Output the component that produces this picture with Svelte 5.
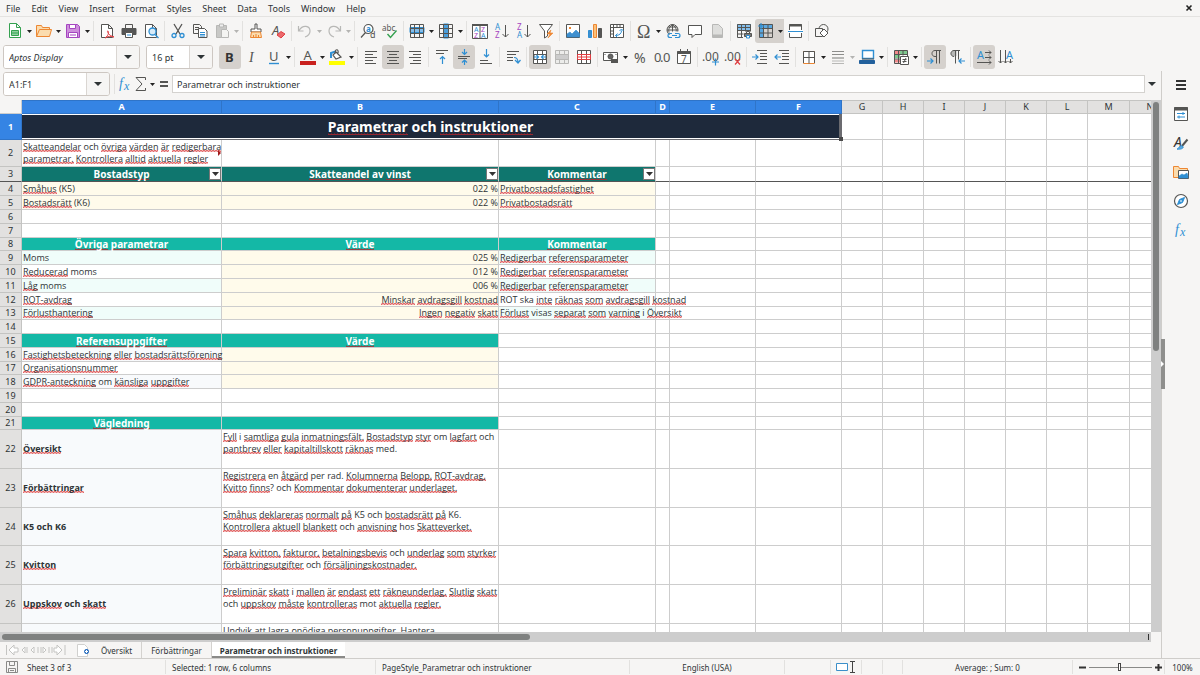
<script>
	const menus = ['File', 'Edit', 'View', 'Insert', 'Format', 'Styles', 'Sheet', 'Data', 'Tools', 'Window', 'Help'];

	const G = '#555553';
	const B = '#2f8fd3';
	const L = '#b8b8b6';
	const O = '#ed8733';
	const P = '#a545c0';
	const R = '#e03e42';

	// small builders for 16x16 icons
	const p = (d, stroke = G, fill = 'none', w = 1) =>
		`<path d="${d}" stroke="${stroke}" fill="${fill}" stroke-width="${w}"/>`;
	const t = (x, y, size, fill, str, extra = '') =>
		`<text x="${x}" y="${y}" font-size="${size}" fill="${fill}" font-family="Noto Sans, sans-serif" ${extra}>${str}</text>`;
	const grid = (c = G, fill = '#fff') => p('M1.5 1.5h13v13h-13zM1.5 5.5h13M1.5 10.5h13M5.5 1.5v13M10.5 1.5v13', c, fill);
	const page = (c = G, fill = '#fff') => p('M2.5 1.5h7l4 4v9h-11zM9.5 1.5v4h4', c, fill);

	const icons = {
		new: p('M2.5 .5h7l4 4v10h-11zM9.5 .5v4h4', '#35a150', '#fff') + p('M4.5 7.5h7v5h-7zM4.5 10h7', '#35a150', '#8fd19e'),
		open: p('M.5 13.5V2.5h5l1 2h7v2', O, '#fbdcae') + p('M.5 13.5l3-7h12l-2 7z', O, '#fbdcae'),
		save: p('M1.5 1.5h11l2 2v11h-13z', P, '#ce8fdc') + p('M4.5 1.5h6v4h-6zM3.5 9.5h9v5h-9z', P, '#fff') + p('M5 12h6', P),
		pdf: page() + p('M6 15c4-3 4-6 3-7s-1 4 6 6c-3-1-6-1-9 1z', R, '#fff'),
		print: p('M4.5 5V1.5h7V5') + p('M1 5.5h14v6H1z', G, '#555') + p('M4.5 9.5h7v5h-7z', G, '#fff') + p('M6 12h4', B),
		preview: page() + p('M6 8.5a3.5 3.5 0 1 0 7 0a3.5 3.5 0 1 0-7 0M12 11.5l3.5 3.5', B, '#d8ebf8', 1.3),
		cut: p('M4 1l6 10M12 1L6 11', G, 'none', 1.3) + p('M2 12.5a2 2 0 1 0 4 0a2 2 0 1 0-4 0M10 12.5a2 2 0 1 0 4 0a2 2 0 1 0-4 0', B, 'none', 1.3),
		copy: p('M1.5 1.5h6l2 2v7h-8zM3 4.5h4M3 6.5h4') + p('M6.5 5.5h6l2.5 2.5v6.5h-8.5z', G, '#fff') + p('M8 9.5h5M8 11.5h5M8 13h5', B),
		paste: p('M2.5 2.5h10v12h-10z', L, '#c8c8c6') + p('M5.5 1h4v3h-4z', L, '#eee') + p('M7.5 6.5h5l2 2v6h-7z', L, '#f4f4f2'),
		clone: p('M7 1h2v5h4v3H3V6h4z', G, '#fff') + p('M3.5 9h9l1 5.5h-11z', O, '#fbdcae') + p('M5.5 12v2M8 11v3M10.5 12v2', O),
		clear: t(2, 12, 13, G, 'A', 'font-style="italic"') + p('M7 12l4-3.5 4 2.5-4 4z', R, '#ec6a6d'),
		undo: p('M1.5 3v5h5M2 7.5C6 1 13 3 13 8c0 3-2 5-5 6', L, 'none', 1.2),
		redo: p('M14.5 3v5h-5M14 7.5C10 1 3 3 3 8c0 3 2 5 5 6', L, 'none', 1.2),
		find: p('M4 6a4.5 4.5 0 1 1 4.5 4.5c-3 0-4.5-2-4.5-4.5M5.5 9.5L1 14.5', G, '#fff', 1.2) + t(6, 9, 8, B, 'a', 'font-weight="bold"') + t(10, 15, 9, G, 'd'),
		spell: t(0, 8, 8, G, 'abc') + p('M5.5 11l3 3.5 6-7', '#35a150', 'none', 1.4),
		row: p('M1 4.5h14v5H1z', B, '#83beec') + grid(G, 'none'),
		column: p('M5.5 1h5v14h-5z', B, '#4a9fdd') + grid(G, 'none'),
		sort: p('M.5 1.5h15v14H.5z', G, '#fff') + p('M0 2h16', G, 'none', 2) + p('M8 3v12') + t(2, 9, 7, B, 'A') + t(2, 15, 7, P, 'Z') + t(9, 9, 7, P, 'Z') + t(9, 15, 7, B, 'A'),
		asc: t(1, 7, 8, B, 'A') + t(1, 15, 8, P, 'Z') + p('M11.5 2v12M8.5 11l3 3 3-3'),
		desc: t(1, 7, 8, P, 'Z') + t(1, 15, 8, B, 'A') + p('M11.5 2v12M8.5 11l3 3 3-3'),
		filter: p('M1.5 1.5h13L9.5 8v5l-3 2V8z', G, '#fff') + p('M13 7l-4 4h3l-2 4 5-5h-3z', O, O, 0.6),
		image: p('M1.5 1.5h13v13h-13z', G, '#fff') + p('M2 14V11l3-2 2 2 4-4 3.5 3.5V14z', B, '#3f8fce', 0.6) + p('M4 5h2', O, 'none', 2),
		chart: p('M1.5 7.5h3v7h-3z', B, '#3f8fce') + p('M6.5 1.5h3v13h-3z', O, '#fbc27b') + p('M11.5 5.5h3v9h-3z', G, '#555'),
		pivot: p('M1.5 1.5h13v13h-13z', G, '#fff') + p('M1.5 4.5h13M4.5 1.5v13M8 2v2M11 2v2M2 8h2M2 11h2') + p('M6.5 12.5c4 0 6-2 6-5M10.5 8l2-2 2 2M8.5 10.5l-2 2 2 2', B),
		omega: t(1, 15, 18, G, 'Ω', 'style="font-family:Liberation Serif,serif"'),
		link: p('M2 7a5.5 5.5 0 1 0 11 0a5.5 5.5 0 1 0-11 0M2 7h11M7.5 1.5v11M3 4h9M5 11c-2-3-2-6 2.5-9.5C12 5 12 8 10 11') + p('M5 9h9v6H5z', '#f6f5f4', '#f6f5f4') + p('M7 10.5h-2a2 2 0 0 0 0 4h2M10 10.5h3a2 2 0 0 1 0 4h-3M7 12.5h5', B, 'none', 1.2),
		comment: p('M1.5 2.5h13v9H8l-3 3v-3H1.5z', G, '#fff'),
		header: p('M3.5 1.5h6l4 4v9h-10z', L, '#dededc') + p('M4 13h9', L, 'none', 3),
		area: p('M1.5 1.5h13v6h-13z', B, '#83beec') + p('M7 14.5H1.5v-13h13v7M1.5 4.5h13M1.5 7.5h13M1.5 11h6M5.5 1.5v13M9.5 1.5v7') + p('M10.5 10V8.500h3V10') + p('M8.5 10.5h7v3h-7z', G, '#777') + p('M10.5 12.5h3v2.5h-3z', B, '#fff'),
		freeze: p('M1.5 3h13M3 1.5v13', '#5aa7e0', 'none', 4) + p('M1.5 1.5h13v13h-13zM1.5 5.5h13M1.5 10h13M5.5 1.5v13M10 1.5v13') + p('M3 0v6M0 3h6', B, 'none', 1.2),
		split: p('M2.5 1.5h12v13h-12z', G, '#fff') + p('M2 2.5h13', G, 'none', 2) + p('M1 8.5h15', '#fff', 'none', 3) + p('M1 8.5h15', B, 'none', 1),
		shapes: p('M5 6a4.5 4.5 0 1 1 9 0a4.5 4.5 0 1 1-9 0') + p('M1.5 5.5h7v8h-7z', G, '#f6f5f4') + p('M10 6l4 4-4 4-4-4z', G, '#fff'),
		bold: t(3, 13, 13, '#333', 'B', 'font-weight="bold"'),
		italic: t(5, 13, 14, G, 'I', 'style="font-family:Liberation Serif,serif;font-style:italic"'),
		underline: t(3, 12, 13, G, 'U') + p('M3 14.5h10', B, 'none', 1.4),
		color: t(3.5, 11, 13, G, 'A') + p('M0 14h16', '#c9211e', 'none', 4),
		fill: p('M2 9V4l6-2', B, 'none', 2) + p('M7 3l5 5-5 2-3-4zM6 5c0-6 4-5 3-1', G, '#fff', 1.2) + p('M0 14h16', '#ffff00', 'none', 4),
		left: p('M2 2.5h12M2 5.5h8M2 8.5h12M2 11.5h8M2 14.5h11'),
		center: p('M2 2.5h12M4 5.5h8M2 8.5h12M4 11.5h8M2 14.5h12'),
		right: p('M2 2.5h12M6 5.5h8M2 8.5h12M6 11.5h8M3 14.5h11'),
		top: p('M2 1.5h12M2 4.5h8') + p('M8.5 15V7.5M6 10l2.5-2.5L11 10', B, 'none', 1.2),
		middle: p('M2 7.5h12M2 9.5h9') + p('M8.5 0v5.5M6 3l2.5 2.5L11 3M8.5 16v-5M6 13.5l2.5-2.5 2.5 2.5', B, 'none', 1.2),
		bottom: p('M2 11.5h8M2 14.5h12') + p('M8.5 0v8M6 5.5L8.5 8 11 5.5', B, 'none', 1.2),
		wrap: p('M2 2.5h12M2 5.5h9M2 8.5h6M2 11.5h6') + p('M9 8.5c3 0 4 2 4 5M10 11l3 3 2.5-3', B, 'none', 1.2),
		merge: grid() + p('M2 5.5h12v5H2z', G, '#fff') + p('M2 8h4.5M4.5 6l2 2-2 2M14 8H9.5M11.5 6l-2 2 2 2', B, 'none', 1.2),
		mergecells: p('M1.5 1.5h13v13h-13zM5.5 1.5v4M10.5 1.5v4M5.5 10.5v4M10.5 10.5v4', L, '#ececea') + p('M1.5 5.5h13v5h-13z', L, '#ccc'),
		unmerge: grid() + p('M1.5 5.5h13v5h-13zM5.5 5.5v5M10.5 5.5v5M1.5 8h13', R),
		currency: p('M.5 3.5h14v8H.5z', G, '#fff') + p('M5 7.5a2.5 2.5 0 1 0 5 0a2.5 2.5 0 1 0-5 0', G, '#666') + p('M8 13h7M8 11h7', G, 'none', 2) + p('M2 5v1M13 5v1'),
		percent: t(2, 14, 14, G, '%'),
		number: t(0, 13, 13, G, '0') + t(6, 13, 13, G, '.') + t(9, 13, 13, G, '0'),
		date: p('M1.5 2.5h13v12h-13z', G, '#fff') + p('M1.5 3.5h13', G, 'none', 3) + p('M4.5 0v3M11.5 0v3') + t(5, 13.5, 10, G, '7'),
		adddec: t(-1, 12, 12, G, '.') + t(2, 12, 12, G, '0') + t(9, 12, 12, G, '0') + p('M9 13h7M12.5 9.5v7', B, 'none', 1.2),
		deldec: t(-1, 12, 12, G, '.') + t(2, 12, 12, G, '0') + t(9, 12, 12, G, '0') + p('M10 10l5 5.5M15 10l-5 5.5', R, 'none', 1.2),
		indent: p('M5 1.5h10M8 4.5h7M8 7.5h7M8 10.5h7M5 14.5h10') + p('M0 8h6M3.5 5.5L6 8l-2.5 2.5', B, 'none', 1.2),
		outdent: p('M5 1.5h10M8 4.5h7M8 7.5h7M8 10.5h7M5 14.5h10') + p('M7 8H1M3.5 5.5L1 8l2.5 2.5', B, 'none', 1.2),
		borders: p('M2.5 2.5h11v12h-11z', O, '#fff') + p('M2.5 14V2.5h11V14M8 2.5v12M2.5 8.5h11'),
		lines: p('M2 2.5h12M2 5.5h12', '#8d8d8b') + p('M2 9h12', L, 'none', 2) + p('M2 12h12M2 14.5h12', L, 'none', 1),
		bordercolor: p('M3.5 1.5h11v8h-11z', B, '#fff', 1.4) + p('M3 10h12', G) + p('M.5 11.5h15v3H.5z', '#22609c', '#22609c'),
		conditional: p('M1.5 1.5h13v13h-13z', G, '#fff') + p('M2 3.5h5M2 12h5', '#f0898b', 'none', 3) + p('M7 3.5h7M2 7.5h5', '#7fc98f', 'none', 3) + p('M1.5 5.5h13M1.5 10h8M5.5 1.5v13M10 1.5v5') + p('M7.5 7.5h8v8h-8zM9.5 10.5h4M9.5 12.5h4M13 9l-2.5 5', G, '#fff'),
		ltr: p('M14 1.5H8c-4 0-4 6 0 6h1M9.5 1.5v13M12.5 1.5v13') + p('M0 12h6M3.5 9.5L6 12l-2.5 2.5', B, 'none', 1.2),
		rtl: p('M7 2H5c-4 0-4 5 0 5h2z', L, L) + p('M11 1.5H5c-4 0-4 6 0 6M6.5 1.5v13M9.5 1.5v9') + p('M16 12h-6M12.5 9.5L10 12l2.5 2.5', B, 'none', 1.2),
		horizontal: t(1, 10, 11, B, 'A') + p('M9 3.5h6M13 1.5l2 2-2 2M9 8.5h6M13 6.5l2 2-2 2M1 13.5h14M13 11.5l2 2-2 2'),
		vertical: t(8, 10, 11, B, 'A') + p('M2.5 1v13M.5 12l2 2 2-2M7.5 1v13M5.5 12l2 2 2-2M12.5 10v4M10.5 12l2 2 2-2'),
		fx: t(2, 12, 14, B, 'f', 'style="font-family:Liberation Serif,serif;font-style:italic"') + t(7, 14, 12, B, 'x', 'style="font-family:Liberation Serif,serif;font-style:italic"'),
		sigma: p('M12.5 4V1.5H3l6 6.5-6 6.5h9.5V12', G, 'none', 1),
		equals: p('M4 6h8M4 10h8', G, 'none', 2),
		hamburger: p('M3 4h10M3 8h10M3 12h10', '#333', 'none', 2),
		properties: p('M1.5 1.5h13v13h-13z', G, '#fff') + p('M1 3h14', G, 'none', 3) + p('M4 7.5h8M10 6v3M4 11h8M6 9.5v3', B),
		styles: t(1, 12, 14, '#333', 'A', 'font-style="italic"') + p('M14.5 4.5L9 11', G, 'none', 2) + p('M4 14c2 0 2-4 5-3s0 4-5 3z', B, '#5da9e0'),
		gallery: p('M.5 13.5V2.5h5l1 2h8v9z', O, '#fbdcae') + p('M5.5 6.5h10v8h-10z', G, '#fff') + p('M6 14v-2l3-2 2 1 3-2 1 3v2z', B, B, 0.6),
		navigator: p('M1.5 8a6.5 6.5 0 1 0 13 0a6.5 6.5 0 1 0-13 0', G, '#fff', 1.2) + p('M11.5 4.5l-2 5-5 2 2-5z', B, B) + p('M7.5 8.5l1-1', '#fff', 'none', 1.4)
	};

	// | is a divider, > a drop-down arrow, * a pressed button, - a disabled one
	const standardBar =
		'new > open > save > | pdf print preview | cut copy -paste -> | clone clear | -undo -> -redo -> | find spell | row > column > | sort asc desc filter | image chart pivot | omega > link comment -header | area *freeze *> split | shapes'.split(' ');
	const formatBar =
		'*bold italic underline > | color > fill > | left *center right | top *middle bottom | wrap | *merge -mergecells unmerge | currency > percent number date | adddec deldec | indent outdent | borders > -lines -> bordercolor > | conditional > | *ltr rtl | *horizontal vertical'.split(' ');

	const columns = ['A', 'B', 'C', 'D', 'E', 'F', 'G', 'H', 'I', 'J', 'K', 'L', 'M', 'N'];
	const widths = [22, 200, 277, 157, 14, 86, 86, 41, 41, 41, 41, 41, 41, 42, 41];

	// [brackets] mark words the spell checker underlines
	// each cell is [text, classes]
	const rows = [
		{ n: 1, h: 26 },
		{ n: 2, h: 27, cells: [['[Skatteandelar] och [övriga] [värden] [är] [redigerbara]\n[parametrar.] [Kontrollera] [alltid] [aktuella] [regler]', 'clipped']] },
		{ n: 3, h: 15, cells: [['[Bostadstyp]', 'dark'], ['[Skatteandel] av [vinst]', 'dark'], ['[Kommentar]', 'dark']] },
		{ n: 4, h: 14, cells: [['[Småhus] (K5)', 'cream'], ['022 %', 'cream num'], ['[Privatbostadsfastighet]', 'cream']] },
		{ n: 5, h: 14, cells: [['[Bostadsrätt] (K6)', 'cream'], ['022 %', 'cream num'], ['[Privatbostadsrätt]', 'cream']] },
		{ n: 6, h: 14 },
		{ n: 7, h: 14 },
		{ n: 8, h: 13, cells: [['[Övriga] [parametrar]', 'teal'], ['[Värde]', 'teal'], ['[Kommentar]', 'teal']] },
		{ n: 9, h: 14, cells: [['Moms', 'mint'], ['025 %', 'cream num'], ['[Redigerbar] [referensparameter]', 'mint']] },
		{ n: 10, h: 14, cells: [['[Reducerad] moms', ''], ['012 %', 'cream num'], ['[Redigerbar] [referensparameter]', '']] },
		{ n: 11, h: 14, cells: [['[Låg] moms', 'mint'], ['006 %', 'cream num'], ['[Redigerbar] [referensparameter]', 'mint']] },
		{ n: 12, h: 14, cells: [['[ROT-avdrag]', ''], ['[Minskar] [avdragsgill] [kostnad]', 'cream num'], ['ROT ska [inte] [räknas] [som] [avdragsgill] [kostnad]', '']] },
		{ n: 13, h: 13, cells: [['[Förlusthantering]', 'mint'], ['[Ingen] [negativ] [skatt]', 'cream num'], ['[Förlust] visas [separat] [som] [varning] i [Översikt]', 'mint']] },
		{ n: 14, h: 14 },
		{ n: 15, h: 14, cells: [['[Referensuppgifter]', 'teal'], ['[Värde]', 'teal']] },
		{ n: 16, h: 14, cells: [['[Fastighetsbeteckning] [eller] [bostadsrättsförening]', 'slate'], ['', 'cream']] },
		{ n: 17, h: 13, cells: [['[Organisationsnummer]', ''], ['', 'cream']] },
		{ n: 18, h: 14, cells: [['[GDPR-anteckning] om [känsliga] [uppgifter]', 'slate'], ['', 'cream']] },
		{ n: 19, h: 14 },
		{ n: 20, h: 14 },
		{ n: 21, h: 13, cells: [['[Vägledning]', 'teal'], ['', 'teal']] },
		{ n: 22, h: 39, cells: [['[Översikt]', 'slate strong'], ['[Fyll] i [samtliga] [gula] [inmatningsfält.] [Bostadstyp] [styr] om [lagfart] och\n[pantbrev] [eller] [kapitaltillskott] [räknas] med.', 'note']] },
		{ n: 23, h: 39, cells: [['[Förbättringar]', 'slate strong'], ['[Registrera] en [åtgärd] per rad. [Kolumnerna] [Belopp,] [ROT-avdrag,]\n[Kvitto] [finns]? och [Kommentar] [dokumenterar] [underlaget.]', 'note']] },
		{ n: 24, h: 38, cells: [['K5 och K6', 'slate strong'], ['[Småhus] [deklareras] [normalt] [på] K5 och [bostadsrätt] [på] K6.\n[Kontrollera] [aktuell] [blankett] och [anvisning] hos [Skatteverket.]', 'note']] },
		{ n: 25, h: 39, cells: [['[Kvitton]', 'slate strong'], ['[Spara] [kvitton,] [fakturor,] [betalningsbevis] och [underlag] [som] [styrker]\n[förbättringsutgifter] och [försäljningskostnader.]', 'note']] },
		{ n: 26, h: 39, cells: [['[Uppskov] och [skatt]', 'slate strong'], ['[Preliminär] [skatt] i [mallen] [är] [endast] [ett] [räkneunderlag.] [Slutlig] [skatt]\noch [uppskov] [måste] [kontrolleras] mot [aktuella] [regler.]', 'note']] },
		{ n: 27, h: 39, cells: [['', 'slate strong'], ['[Undvik] att [lagra] [onödiga] [personuppgifter.] [Hantera]', 'note']] }
	];

	const sidebar = ['hamburger', 'properties', 'styles', 'gallery', 'navigator', 'fx'];

	let fontName = $state('Aptos Display');
	let fontSize = $state('16 pt');
	let reference = $state('A1:F1');
	let formula = $state('Parametrar och instruktioner');
	let zoom = $state(48);
	let activeTab = $state('Parametrar och instruktioner');
</script>

{#snippet icon(name)}
	<svg width="16" height="16" viewBox="0 0 16 16" aria-hidden="true">{@html icons[name]}</svg>
{/snippet}

{#snippet arrow()}
	<svg width="5" height="3" viewBox="0 0 5 3" aria-hidden="true"><path d="M0 0h5L2.5 3z" fill="currentColor" /></svg>
{/snippet}

{#snippet bigArrow()}
	<svg width="8" height="4" viewBox="0 0 8 4" aria-hidden="true"><path d="M0 0h8L4 4z" fill="#2e3436" /></svg>
{/snippet}

{#snippet tools(items)}
	{#each items as item, i}
		{@const name = item.replace(/^[*-]/, '')}
		{@const off = item.startsWith('-')}
		{#if item === '|'}
			<span class="divider"></span>
		{:else if name === '>'}
			<button class="drop" class:pressed={item[0] === '*'} disabled={off} aria-label="{items[i - 1]} options">{@render arrow()}</button>
		{:else}
			<button class="tool" class:pressed={item[0] === '*'} class:joined={items[i + 1] === '*>'} disabled={off} aria-label={name}>{@render icon(name)}</button>
		{/if}
	{/each}
{/snippet}

{#snippet spelled(text)}{#each text.split(/[[\]]/) as part, i}{#if i % 2}<span class="typo">{part}</span>{:else}{part}{/if}{/each}{/snippet}

<div class="app">
	<nav class="menubar">
		{#each menus as menu}
			<button>{menu}</button>
		{/each}
		<button class="close" aria-label="Close document">
			<svg width="6" height="6" viewBox="0 0 6 6"><path d="M.5 .5l5 5M5.5 .5l-5 5" stroke="#222" stroke-width="1.6" /></svg>
		</button>
	</nav>

	<div class="toolbar standard">
		{@render tools(standardBar)}
	</div>

	<div class="toolbar format">
		<div class="combo font">
			<input bind:value={fontName} aria-label="Font name" />
			<button aria-label="Choose font">{@render bigArrow()}</button>
		</div>
		<div class="combo size">
			<input bind:value={fontSize} aria-label="Font size" />
			<button aria-label="Choose size">{@render bigArrow()}</button>
		</div>
		{@render tools(formatBar)}
	</div>

	<div class="work">
		<main>
			<div class="formulabar">
				<div class="combo name">
					<input bind:value={reference} aria-label="Name box" />
					<button aria-label="Choose range">{@render bigArrow()}</button>
				</div>
				<span class="divider"></span>
				<button class="small" aria-label="Function wizard">{@render icon('fx')}</button>
				<button class="small" aria-label="Sum">{@render icon('sigma')}</button>
				<button class="drop" aria-label="Sum options">{@render arrow()}</button>
				<button class="small" aria-label="Formula">{@render icon('equals')}</button>
				<input class="formula" bind:value={formula} aria-label="Formula" />
				<button class="expand" aria-label="Expand formula bar">{@render bigArrow()}</button>
			</div>

			<div class="view">
				<div class="sheet">
					<table>
						<colgroup>
							{#each widths as w}
								<col style="width: {w}px" />
							{/each}
						</colgroup>
						<thead>
							<tr>
								<td class="corner"></td>
								{#each columns as col, i}
									<th scope="col" class:selected={i < 6}>{col}</th>
								{/each}
							</tr>
						</thead>
						<tbody>
							{#each rows as row}
								<tr class:frozen={row.n === 3} style="height: {row.h}px">
									<th scope="row" class:selected={row.n === 1}>{row.n}</th>
									{#if row.n === 1}
										<td class="title" colspan="6">{@render spelled('[Parametrar] och [instruktioner]')}<span class="handle"></span></td>
									{/if}
									{#each columns.slice(row.n === 1 ? 6 : 0) as col, i}
										{@const cell = row.cells?.[i] ?? ['', '']}
										<td class={cell[1]}>{#if cell[0]}{@render spelled(cell[0])}{/if}{#if cell[1] === 'dark'}<button class="autofilter" aria-label="Filter {col}"><svg width="7" height="4" viewBox="0 0 7 4"><path d="M0 0h7L3.5 4z" fill="#333" /></svg></button>{/if}</td>
									{/each}
								</tr>
							{/each}
						</tbody>
					</table>
				</div>
				<div class="vscroll"><div></div></div>
			</div>
			<div class="hscroll"><div></div><span></span></div>

			<div class="tabs">
				<svg class="jump" width="62" height="14" viewBox="0 0 62 14" fill="#fff" stroke="#c4c4c2">
					<path d="M1.5 2v10M4 7l5-5v3h4v4H9v3zM17 7l3-3v6zM22 4v6M26 7l3-3v6zM33 4v6M38 4l3 3-3 3zM36 4v6M44 4v6M47 4v6M49 5h3V2l5 5-5 5V9h-3zM60 2v10" />
				</svg>
				<button class="add" aria-label="Add sheet">
					<svg width="13" height="13" viewBox="0 0 13 13">
						<path d="M.5 .5h7l3 3v9H.5z" fill="#fff" stroke="#d0d0ce" />
						<path d="M9.5 5a2.5 2.5 0 1 0 .1 0z" fill="#2a6fc0" />
						<path d="M8 7.5h3M9.5 6v3" stroke="#fff" />
					</svg>
				</button>
				{#each ['Översikt', 'Förbättringar', 'Parametrar och instruktioner'] as tab}
					<button class="tab" class:active={tab === activeTab} onclick={() => (activeTab = tab)}>{tab}</button>
				{/each}
			</div>
		</main>

		<aside>
			{#each sidebar as name}
				<button aria-label={name}>{@render icon(name)}</button>
			{/each}
			<div class="splitter">
				<svg width="3" height="6" viewBox="0 0 3 6"><path d="M0 0l3 3-3 3z" fill="#fff" /></svg>
			</div>
		</aside>
	</div>

	<footer>
		<span class="saved">
			<svg width="12" height="12" viewBox="0 0 12 12" fill="none" stroke="#8a8a88"><path d="M.5 .5h11v11H.5zM3.5 .5v4h5v-4M2.5 11.5v-4h7v4M4 9.5h4" /></svg>
		</span>
		<span>Sheet 3 of 3</span>
		<span>Selected: 1 row, 6 columns</span>
		<span>PageStyle_Parametrar och instruktioner</span>
		<span class="mid">English (USA)</span>
		<span></span>
		<span class="mid">
			<svg width="20" height="12" viewBox="0 0 20 12" fill="none"><path d="M.5 2.5h11v7H.5z" fill="#fff" stroke="#3b8fc9" /><path d="M14 .5h5M14 11.5h5M16.5 .5v11" stroke="#444" /></svg>
		</span>
		<span></span>
		<span></span>
		<span class="mid">Average: ; Sum: 0</span>
		<span class="zoomer">
			<button aria-label="Zoom out"><svg width="7" height="7" viewBox="0 0 7 7"><path d="M0 3.5h7" stroke="#333" stroke-width="2" /></svg></button>
			<input type="range" min="0" max="100" bind:value={zoom} aria-label="Zoom" />
			<button aria-label="Zoom in"><svg width="7" height="7" viewBox="0 0 7 7"><path d="M0 3.5h7M3.5 0v7" stroke="#333" stroke-width="2" /></svg></button>
		</span>
		<span class="mid">100%</span>
	</footer>
</div>

<style>
	:global(body) {
		margin: 0;
		background: #f6f5f4;
	}

	.app {
		display: flex;
		flex-direction: column;
		height: 100vh;
		overflow: hidden;
		font-family: 'Noto Sans', 'Open Sans', sans-serif;
		font-size: 9px;
		color: #2e3436;
	}

	button {
		font: inherit;
		color: inherit;
		background: none;
		border: 0;
		padding: 0;
		display: flex;
		align-items: center;
		justify-content: center;
	}

	input {
		font: inherit;
		color: inherit;
		border: 0;
		outline: 0;
		min-width: 0;
		box-sizing: border-box;
	}

	svg {
		display: block;
		flex: none;
		overflow: visible;
	}

	/* menu and toolbars */
	.menubar {
		display: flex;
		align-items: center;
		gap: 11px;
		height: 16px;
		padding: 0 8px 0 6px;
		border-bottom: 1px solid #e4e3e1;
	}

	.close {
		margin-left: auto;
	}

	.toolbar {
		display: flex;
		align-items: center;
		height: 24px;
	}

	.standard {
		padding: 2px 5px 1px 4px;
	}

	.format {
		padding: 1px 3px 2px;
	}

	.tool {
		width: 22px;
		height: 24px;
		border-radius: 3px;
	}

	.drop {
		width: 7px;
		height: 24px;
		color: #222;
	}

	.drop:disabled {
		color: #b4b4b2;
	}

	.pressed {
		background: #d5d1cd;
	}

	.joined {
		border-radius: 3px 0 0 3px;
	}

	.divider {
		width: 1px;
		height: 20px;
		margin: 0 2px;
		background: #e2e1df;
	}

	.combo {
		display: flex;
		height: 24px;
		box-sizing: border-box;
		border: 1px solid #cdc7c2;
		border-radius: 3px;
		background: #fff;
		overflow: hidden;
	}

	.combo input {
		flex: 1;
		padding: 0 5px;
	}

	.combo button {
		width: 23px;
		background: #f6f5f4;
		border-left: 1px solid #dad6d2;
	}

	.font {
		width: 137px;
		margin-right: 6px;
		font-style: italic;
	}

	.size {
		width: 67px;
		margin-right: 6px;
	}

	/* formula bar */
	.work {
		flex: 1;
		display: flex;
		min-height: 0;
	}

	main {
		flex: 1;
		display: flex;
		flex-direction: column;
		min-width: 0;
	}

	.formulabar {
		display: flex;
		align-items: center;
		height: 24px;
		padding: 1px 3px 4px;
	}

	.name {
		width: 107px;
		margin-right: 2px;
	}

	.small {
		width: 16px;
	}

	.formula {
		flex: 1;
		height: 18px;
		padding: 0 4px;
		border: 1px solid #d4d2cf;
		background: #fff;
	}

	.expand {
		width: 13px;
	}

	/* sheet */
	.view {
		flex: 1;
		display: flex;
		min-height: 0;
	}

	.sheet {
		flex: 1;
		min-width: 0;
		overflow: hidden;
		background: #fff;
	}

	table {
		table-layout: fixed;
		width: 0;
		border-collapse: separate;
		border-spacing: 0;
		line-height: 12px;
	}

	td,
	th {
		box-sizing: border-box;
		padding: 0;
		border: solid #cdcdcd;
		border-width: 0 1px 1px 0;
		white-space: pre;
	}

	td {
		padding: 0 1px;
		text-align: left;
		font-family: 'Open Sans', 'Noto Sans', sans-serif;
	}

	th {
		background: #e2e1e0;
		border-color: #c4c4c2;
		font-weight: normal;
		text-align: center;
		overflow: hidden;
	}

	thead th {
		height: 14px;
		border-top: 1px solid #c4c4c2;
	}

	.corner {
		background: #f6f5f4;
	}

	th.selected {
		background: #3584e4;
		border-color: #2f74c8;
		color: #fff;
		font-weight: bold;
	}

	.typo {
		background-image:
			linear-gradient(90deg, #e26a6a 50%, #f0b4b4 50%),
			linear-gradient(90deg, #f0b4b4 50%, #e26a6a 50%);
		background-size: 3px 1px;
		background-position: 0 calc(100% - 1px), 0 calc(100% - 2px);
		background-repeat: repeat-x;
	}

	.dark .typo,
	.teal .typo,
	.title .typo {
		background-image: linear-gradient(#b3262ecc, #b3262ecc), linear-gradient(90deg, #b3262e66 50%, transparent 50%);
	}

	.title {
		position: relative;
		background: #1e293b;
		color: #fff;
		font-family: 'Noto Sans', 'Open Sans', sans-serif;
		font-size: 14px;
		font-weight: bold;
		line-height: 20px;
		text-align: center;
		border-color: #6b6b70;
		border-right-width: 3px;
		box-shadow: inset 0 1px #fff, inset 0 -1px #fff;
	}

	.handle {
		position: absolute;
		right: -4px;
		bottom: -2px;
		width: 4px;
		height: 4px;
		background: #4a4a4a;
	}

	.frozen th,
	.frozen td {
		border-bottom-color: #555;
	}

	.dark,
	.teal {
		color: #fff;
		font-family: 'Noto Sans', 'Open Sans', sans-serif;
		font-size: 10px;
		font-weight: bold;
		text-align: center;
	}

	.dark {
		position: relative;
		background: #0f766e;
	}

	.teal {
		background: #14b8a6;
	}

	.cream {
		background: #fffbeb;
	}

	.mint {
		background: #f0fdfa;
	}

	.slate {
		background: #f8fafc;
	}

	.num {
		text-align: right;
		padding-right: 0;
	}

	.strong {
		font-weight: bold;
	}

	.note {
		vertical-align: top;
		padding-top: 1px;
	}

	.clipped {
		position: relative;
	}

	.clipped::after {
		content: '';
		position: absolute;
		right: 0;
		top: 10px;
		border: solid transparent;
		border-width: 3px 0 3px 3px;
		border-left-color: #a01c1c;
	}

	.autofilter {
		position: absolute;
		right: 0;
		top: 1px;
		width: 12px;
		height: 12px;
		background: #fff;
		border: 1px solid #777;
	}

	.vscroll {
		width: 10px;
		padding: 2px 2px 0;
		box-sizing: border-box;
		background: #cdcdcd;
	}

	.vscroll div {
		height: 47%;
		border-radius: 3px;
		background: #7f8180;
	}

	.hscroll {
		display: flex;
		justify-content: space-between;
		height: 6px;
		margin-right: 10px;
		padding: 2px;
		background: #cdcdcd;
	}

	.hscroll div {
		width: 46%;
		border-radius: 3px;
		background: #7f8180;
	}

	.hscroll span {
		width: 1px;
		background: #333;
	}

	/* sheet tabs */
	.tabs {
		display: flex;
		height: 16px;
		font-size: 8px;
	}

	.jump {
		margin: 1px 10px 0 5px;
	}

	.add {
		margin-right: 2px;
	}

	.tab {
		padding: 0 9px;
		border-right: 1px solid #d4d2cf;
	}

	.active {
		padding: 0 8px;
		font-weight: bold;
		background: #fff;
		border-right: 0;
		box-shadow: inset 0 -2px #8a8a88;
	}

	/* sidebar */
	aside {
		position: relative;
		display: flex;
		flex-direction: column;
		align-items: center;
		gap: 5px;
		width: 39px;
		box-sizing: border-box;
		padding-top: 2px;
		border-left: 1px solid #cfcdca;
	}

	aside button {
		width: 24px;
		height: 24px;
	}

	.splitter {
		position: absolute;
		left: -1px;
		top: 268px;
		display: flex;
		align-items: center;
		width: 4px;
		height: 50px;
		background: #8f8f8d;
	}

	/* status bar */
	footer {
		display: grid;
		grid-template-columns: 21px 145fr 210fr 254fr 155fr 46fr 31fr 21fr 20fr 170fr 92px 35px;
		align-items: center;
		height: 16px;
		border-top: 1px solid #cfcdca;
		font-size: 8px;
	}

	footer > span {
		height: 14px;
		display: flex;
		align-items: center;
		padding-left: 6px;
		border-right: 1px solid #e2e1df;
		white-space: nowrap;
	}

	footer .saved {
		border-right: 0;
	}

	footer .mid {
		justify-content: center;
		padding-left: 0;
	}

	footer .mid:last-child {
		border-right: 0;
	}

	footer .zoomer {
		gap: 3px;
		padding: 0 2px 0 6px;
	}

	.zoomer input {
		appearance: none;
		flex: 1;
		height: 1px;
		margin: 0;
		background: #8a8a88;
	}

	.zoomer input::-webkit-slider-thumb {
		appearance: none;
		width: 3px;
		height: 8px;
		border: 1px solid #444;
		background: #fff;
	}
</style>
